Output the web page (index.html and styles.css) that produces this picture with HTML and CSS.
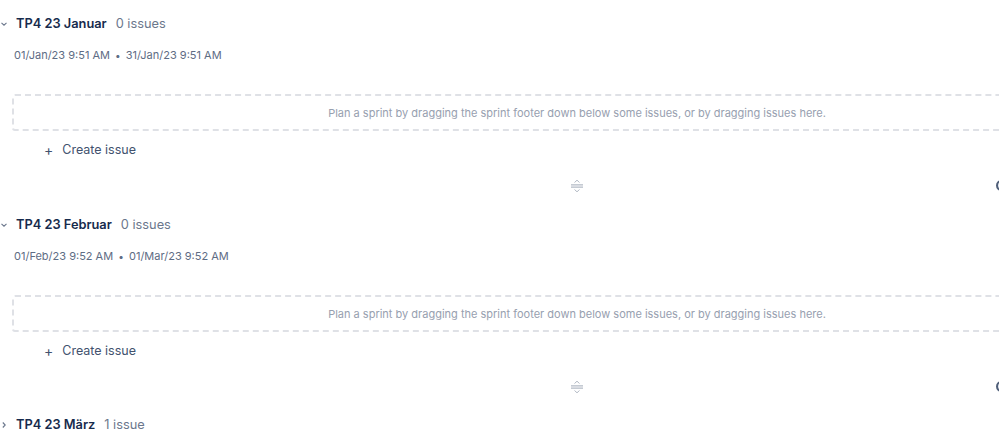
FILE: index.html
```html
<!DOCTYPE html>
<html lang="de">
<head>
    <meta charset="UTF-8">
    <meta name="viewport" content="width=device-width, initial-scale=1.0">
    <title>Backlog</title>
    <link rel="stylesheet" href="styles.css">
</head>
<body>

    <div class="backlog">

        <!-- Sprint Januar -->
        <section class="sprint">
            <div class="sprint-header">
                <svg class="chevron" width="8" height="8" viewBox="0 0 8 8"><path d="M1.5 2.8 L4 5.2 L6.5 2.8" fill="none" stroke="#6b778c" stroke-width="1.1"/></svg>
                <span class="sprint-name">TP4 23 Januar</span>
                <span class="sprint-count">0 issues</span>
            </div>
            <div class="sprint-dates">01/Jan/23 9:51 AM <span class="dot">•</span> 31/Jan/23 9:51 AM</div>
            <div class="dropzone">Plan a sprint by dragging the sprint footer down below some issues, or by dragging issues here.</div>
            <div class="create-issue"><span class="plus">+</span> Create issue</div>
            <div class="sprint-footer">
                <svg class="handle" width="14" height="14" viewBox="0 0 14 14">
                    <path d="M4.5 3.5 L7 1.2 L9.5 3.5" fill="none" stroke="#b3bac5" stroke-width="1"/>
                    <path d="M1 5.8 H13 M1 8.2 H13" stroke="#b3bac5" stroke-width="1.2"/>
                    <path d="M4.5 10.5 L7 12.8 L9.5 10.5" fill="none" stroke="#b3bac5" stroke-width="1"/>
                </svg>
                <span class="footer-btn"></span>
            </div>
        </section>

        <!-- Sprint Februar -->
        <section class="sprint">
            <div class="sprint-header">
                <svg class="chevron" width="8" height="8" viewBox="0 0 8 8"><path d="M1.5 2.8 L4 5.2 L6.5 2.8" fill="none" stroke="#6b778c" stroke-width="1.1"/></svg>
                <span class="sprint-name">TP4 23 Februar</span>
                <span class="sprint-count">0 issues</span>
            </div>
            <div class="sprint-dates">01/Feb/23 9:52 AM <span class="dot">•</span> 01/Mar/23 9:52 AM</div>
            <div class="dropzone">Plan a sprint by dragging the sprint footer down below some issues, or by dragging issues here.</div>
            <div class="create-issue"><span class="plus">+</span> Create issue</div>
            <div class="sprint-footer">
                <svg class="handle" width="14" height="14" viewBox="0 0 14 14">
                    <path d="M4.5 3.5 L7 1.2 L9.5 3.5" fill="none" stroke="#b3bac5" stroke-width="1"/>
                    <path d="M1 5.8 H13 M1 8.2 H13" stroke="#b3bac5" stroke-width="1.2"/>
                    <path d="M4.5 10.5 L7 12.8 L9.5 10.5" fill="none" stroke="#b3bac5" stroke-width="1"/>
                </svg>
                <span class="footer-btn"></span>
            </div>
        </section>

        <!-- Sprint März -->
        <section class="sprint">
            <div class="sprint-header">
                <svg class="chevron" width="8" height="8" viewBox="0 0 8 8"><path d="M2.8 1.5 L5.2 4 L2.8 6.5" fill="none" stroke="#6b778c" stroke-width="1.1"/></svg>
                <span class="sprint-name">TP4 23 März</span>
                <span class="sprint-count">1 issue</span>
            </div>
        </section>

    </div>

</body>
</html>
```

FILE: styles.css
```css
/* Reset */
* {
    margin: 0;
    padding: 0;
    box-sizing: border-box;
}

body {
    font-family: Inter, "Liberation Sans", Arial, sans-serif;
    background: #fff;
    color: #172b4d;
    overflow: hidden;
}

/* Contenedor (más ancho que la ventana, recortado a la derecha) */
.backlog {
    width: 1142px;
    height: 443px;
    overflow: hidden;
}

.sprint {
    height: 200px;
}

.sprint:first-child {
    height: 201px;
}

/* Cabecera del sprint */
.sprint-header {
    height: 46px;
    padding-top: 1px;
    display: flex;
    align-items: center;
    gap: 8px;
}

.chevron {
    flex: none;
}

.sprint-name {
    font-size: 12.8px;
    font-weight: 600;
    color: #172b4d;
}

.sprint-count {
    font-size: 12.8px;
    color: #6b778c;
    margin-left: 1px;
}

/* Fechas */
.sprint-dates {
    height: 19px;
    line-height: 18px;
    padding-top: 0;
    padding-left: 14px;
    font-size: 11px;
    color: #5e6c84;
}

.sprint-dates .dot {
    margin: 0 2px;
    font-size: 10px;
}

/* Zona vacía */
.dropzone {
    margin: 29px 0 0 12px;
    height: 37px;
    border: 2px dashed #dfe1e6;
    border-radius: 3px;
    display: flex;
    align-items: center;
    justify-content: center;
    font-size: 11px;
    color: #97a0af;
}

/* Crear incidencia */
.create-issue {
    height: 36px;
    display: flex;
    align-items: center;
    padding-left: 44px;
    font-size: 12.5px;
    color: #42526e;
}

.create-issue .plus {
    font-size: 14px;
    margin-right: 9px;
}

/* Pie del sprint */
.sprint-footer {
    position: relative;
    height: 34px;
    display: flex;
    justify-content: center;
    padding-top: 12px;
}

.handle {
    margin-left: 12px;
}

.footer-btn {
    position: absolute;
    left: 996px;
    top: 13px;
    width: 12px;
    height: 11px;
    border: 2px solid #505f79;
    border-radius: 6px;
    background: #e9ecf2;
}
```
